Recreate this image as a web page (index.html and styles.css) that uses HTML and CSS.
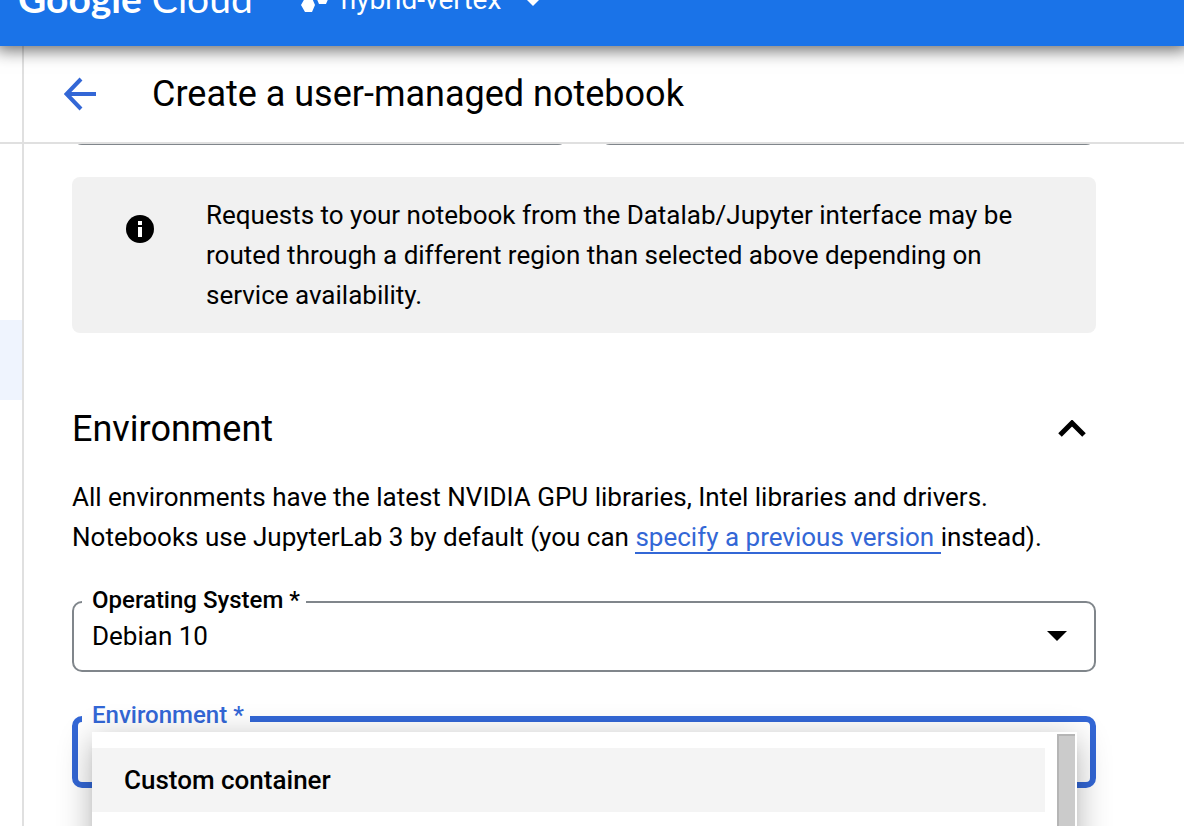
FILE: index.html
```html
<!DOCTYPE html>
<html lang="en">
<head>
<meta charset="utf-8">
<title>Create a user-managed notebook</title>
<link rel="stylesheet" href="styles.css">
</head>
<body>
<header class="topbar">
  <div class="brand"><span class="brand-strong">Google</span> Cloud</div>
  <button class="project" type="button">
    <svg class="project-icon" width="28" height="32" viewBox="0 0 28 32" aria-hidden="true"><path d="M9 1h10l4 7-4 7H9L5 8zM4 17h7l3 7-3 7H4l-4-7zM18 9h7l3 7-3 7h-7l-3-7z"/></svg>
    <span>hybrid-vertex</span>
    <svg class="project-caret" width="24" height="12" viewBox="0 0 24 12" aria-hidden="true"><path d="M0 0h24L12 12z"/></svg>
  </button>
</header>
<div class="shell">
  <div class="titlebar">
    <button class="back" type="button" aria-label="Back">
      <svg width="34" height="34" viewBox="0 0 34 34" aria-hidden="true"><path d="M32 17H4M17 2L2.500 17 17 32"/></svg>
    </button>
    <h1 class="title">Create a user-managed notebook</h1>
  </div>
  <div class="body">
    <nav class="rail" aria-label="Sections"><a class="rail-item" href="#environment" aria-label="Notebooks"></a></nav>
    <main class="content">
      <div class="field-row">
        <input class="plain-field" type="text" aria-label="Region">
        <input class="plain-field" type="text" aria-label="Zone">
      </div>
      <div class="notice">
        <svg class="notice-icon" width="28" height="28" viewBox="0 0 28 28" aria-hidden="true"><circle cx="14" cy="14" r="14"/><path class="notice-mark" d="M12 6h4v4h-4zM12 12h4v10h-4z"/></svg>
        <p class="notice-text">Requests to your notebook from the Datalab/Jupyter interface may be routed through a different region than selected above depending on service availability.</p>
      </div>
      <section id="environment">
        <div class="section-head">
          <h2 class="title">Environment</h2>
          <button class="collapse" type="button" aria-label="Collapse">
            <svg width="28" height="18" viewBox="0 0 28 18" aria-hidden="true"><path d="M2 15L14 3l12 12"/></svg>
          </button>
        </div>
        <p class="intro">All environments have the latest NVIDIA GPU libraries, Intel libraries and drivers. Notebooks use JupyterLab 3 by default (you can <a class="link" href="#version">specify a previous version </a>instead).</p>
        <fieldset class="field">
          <legend class="legend"><label for="os">Operating System *</label></legend>
          <div class="select-wrap">
            <select class="select" id="os"><option>Debian 10</option></select>
            <svg class="caret" width="20" height="10" viewBox="0 0 20 10" aria-hidden="true"><path d="M0 0h20L10 10z"/></svg>
          </div>
        </fieldset>
        <div class="dropdown">
          <fieldset class="field field-active">
            <legend class="legend"><label for="env">Environment *</label></legend>
            <div class="select-wrap"><select class="select" id="env"><option value=""></option></select></div>
          </fieldset>
          <div class="menu">
            <div class="options" role="listbox" aria-label="Environment">
              <button class="option" type="button" role="option" aria-selected="true">Custom container</button>
            </div>
            <div class="scroll-thumb"></div>
          </div>
        </div>
      </section>
    </main>
  </div>
</div>
</body>
</html>
```
FILE: styles.css
```css
* { box-sizing: border-box; }
body {
  margin: 0;
  height: 100vh;
  overflow: hidden;
  display: flex;
  flex-direction: column;
  background: #fff;
  color: #000;
  font: 26px/40px Roboto, sans-serif;
}
h1, h2, p { margin: 0; }
button, select, input { font: inherit; color: inherit; }
button { border: 0; padding: 0; background: none; text-align: left; }

.topbar {
  position: relative;
  z-index: 2;
  flex: none;
  height: 46px;
  padding: 0 18px 26px;
  display: flex;
  align-items: flex-end;
  gap: 48px;
  background: #1a73e8;
  color: #fff;
  box-shadow: 0 0 16px 4px rgba(0, 0, 0, .6);
}
.brand { font: 39px/44px Lato, sans-serif; white-space: nowrap; }
.brand-strong { font-weight: 700; }
.project { display: flex; align-items: center; gap: 12px; font-size: 28px; white-space: nowrap; }
.project-icon, .project-caret { fill: #fff; }
.project-icon { margin-bottom: 6px; }
.project-caret { margin-left: 8px; }

.shell { flex: 1; min-height: 0; display: flex; flex-direction: column; }
.titlebar {
  position: relative;
  flex: none;
  height: 98px;
  margin-left: 22px;
  padding-left: 40px;
  display: flex;
  align-items: center;
  gap: 54px;
  border-left: 2px solid #e0e0e0;
  border-bottom: 2px solid #e0e0e0;
}
.titlebar::before {
  content: "";
  position: absolute;
  right: 100%;
  bottom: -2px;
  width: 24px;
  height: 2px;
  background: #e0e0e0;
}
.back { display: flex; }
.back svg { fill: none; stroke: #3367d6; stroke-width: 4; }
.title { font-size: 36px; line-height: 48px; font-weight: 400; }

.body { flex: 1; min-height: 0; display: flex; overflow: hidden; }
.rail { flex: none; width: 24px; padding-top: 176px; border-right: 2px solid #e0e0e0; }
.rail-item { display: block; height: 80px; background: #eff4fe; }
.content { flex: 1; min-width: 0; padding: 0 88px 0 48px; }

.field-row { display: grid; grid-template-columns: 1fr 1fr; gap: 32px; margin-top: -69px; }
.plain-field { min-width: 0; height: 70px; border: 2px solid #80868b; border-radius: 10px; background: #fff; }

.notice {
  margin-top: 32px;
  padding: 18px 54px;
  display: flex;
  gap: 52px;
  background: #f1f1f1;
  border-radius: 8px;
}
.notice-icon { flex: none; margin-top: 20px; }
.notice-mark { fill: #fff; }

.section-head { margin-top: 72px; display: flex; align-items: center; justify-content: space-between; }
.collapse { display: flex; margin-right: 10px; }
.collapse svg { fill: none; stroke: #000; stroke-width: 5; }
.intro { margin-top: 24px; }
.link { color: #3367d6; text-decoration: none; border-bottom: 2px solid #3367d6; }

.field {
  min-width: 0;
  margin: 33px 0 0;
  padding: 0 8px;
  border: 2px solid #80868b;
  border-radius: 10px;
}
.legend { padding: 0 6px 4px 10px; font-size: 24px; line-height: 20px; font-weight: 500; }
.select-wrap { display: flex; align-items: center; height: 56px; padding: 0 19px 0 10px; }
.select {
  flex: 1;
  min-width: 0;
  height: 40px;
  margin-bottom: 12px;
  padding: 0;
  border: 0;
  outline: 0;
  background: none;
  appearance: none;
}
.caret { margin-bottom: 12px; }
.dropdown { position: relative; margin-top: 33px; }
.field-active { margin: 0; padding: 0 4px; border: 6px solid #3367d6; }
.field-active .legend { padding-bottom: 8px; color: #3367d6; }
.field-active .select-wrap { height: 49px; }

.menu {
  position: absolute;
  top: 27px;
  left: 20px;
  right: 19px;
  height: 400px;
  padding: 2px 2px 0 0;
  display: flex;
  gap: 12px;
  background: #fff;
  box-shadow: 0 10px 10px -6px rgba(0, 0, 0, .2), 0 8px 32px rgba(0, 0, 0, .3);
}
.options { flex: 1; padding-top: 14px; }
.option { display: block; width: 100%; height: 64px; padding: 0 32px; background: #f4f4f4; font-weight: 500; }
.scroll-thumb { width: 18px; background: #cbcbcb; border-top: 2px solid #b5b5b5; border-left: 2px solid #b5b5b5; }
```
